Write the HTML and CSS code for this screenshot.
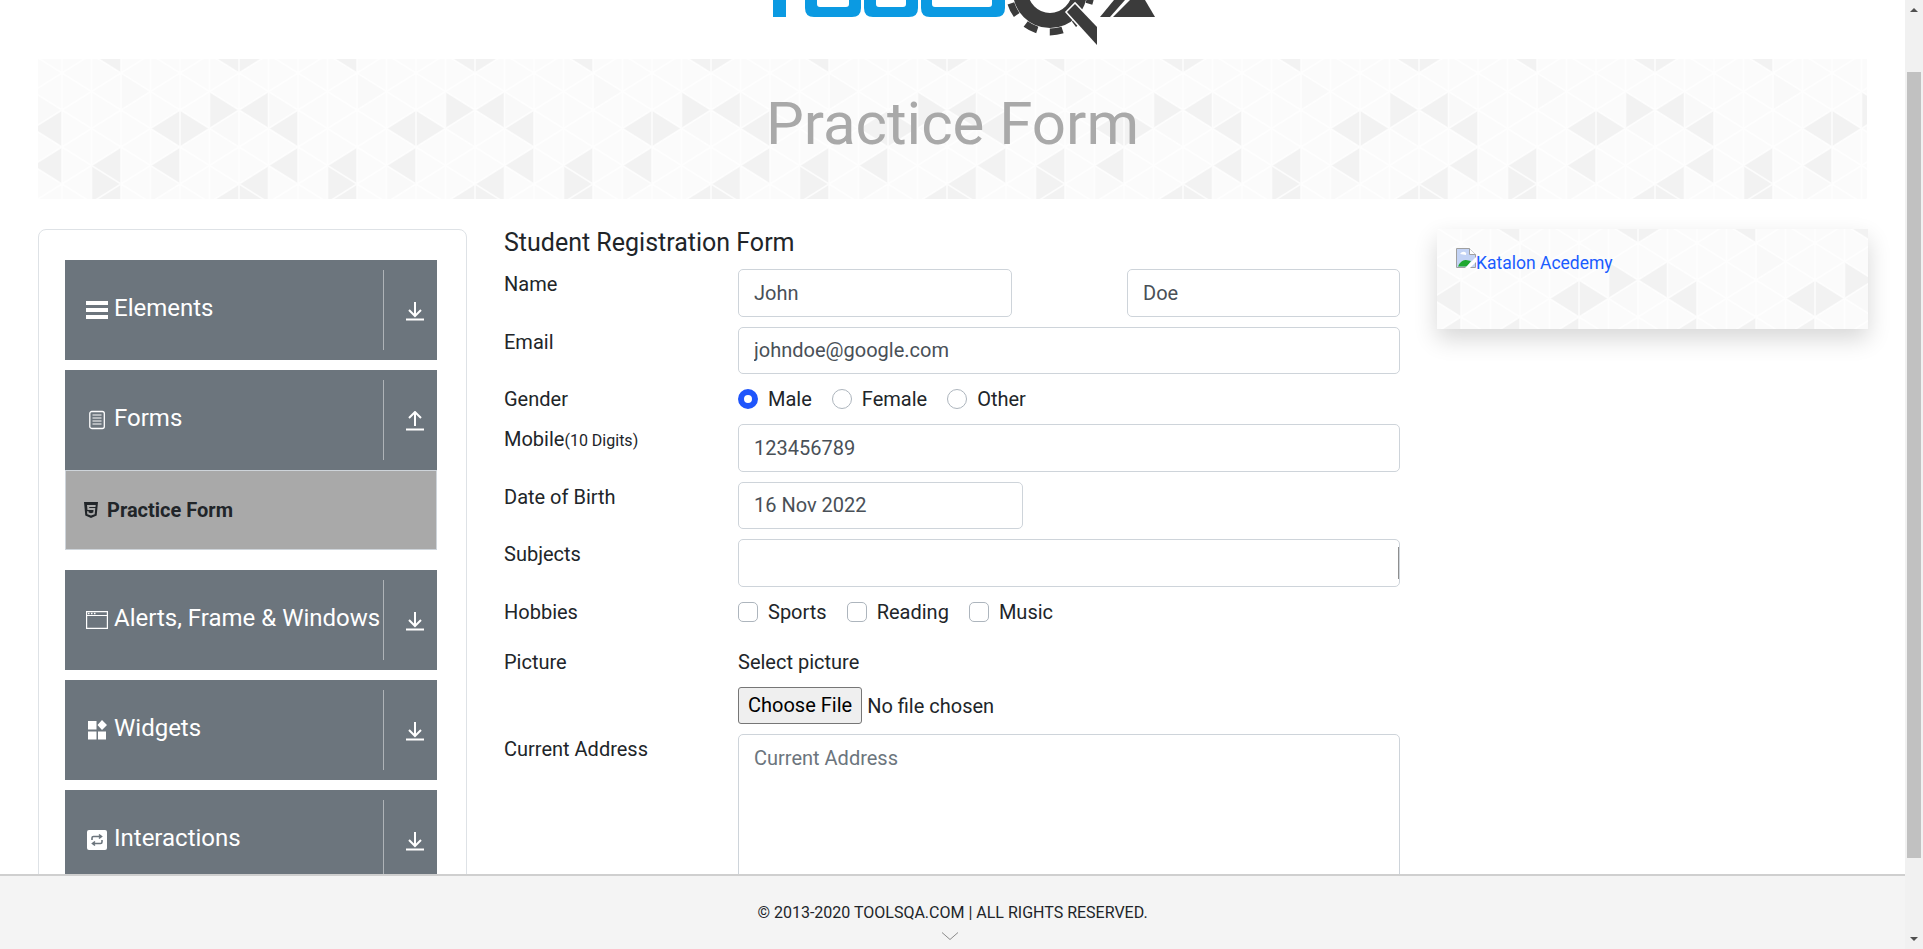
FILE: index.html
```html
<!DOCTYPE html>
<html lang="en">

<head>
    <meta charset="UTF-8">
    <meta name="viewport" content="width=device-width, initial-scale=1.0">
    <title>Practice Form</title>
    <link rel="stylesheet" href="styles.css">
</head>

<body>
    <div class="page">
        <div class="viewport">
            <header class="logo-bar">
                <svg class="logo" viewBox="750 0 405 59" width="405" height="59">
                    <g fill="#0b9ae2">
                        <rect x="773" y="-10" width="13" height="27"/>
                        <path d="M805-10h12v14q0 3 3 3h26q3 0 3-3v-14h12v18q0 9-9 9h-38q-9 0-9-9z"/>
                        <path d="M864-10h12v14q0 3 3 3h24q3 0 3-3v-14h12v18q0 9-9 9h-36q-9 0-9-9z"/>
                        <path d="M921-10h11v14q0 3 3 3h54q3 0 3-3v-14h13v18q0 9-9 9h-66q-9 0-9-9z"/>
                    </g>
                    <circle cx="1050" cy="-9" r="29.500" fill="none" stroke="#3b3b3b" stroke-width="15"/>
                    <circle cx="1050" cy="-9" r="41" fill="none" stroke="#3b3b3b" stroke-width="7" stroke-dasharray="13 12.760"/>
                    <path d="M1067 12l8-8 22 23v18z" fill="#3b3b3b" stroke="#fff" stroke-width="3" paint-order="stroke"/>
                    <g fill="#3b3b3b">
                        <path d="M1100 17h10l15-17h-11z"/>
                        <path d="M1113 17l17-17h15l10 17z"/>
                    </g>
                </svg>
            </header>

            <div class="main-header">
                <h1>Practice Form</h1>
            </div>

            <div class="content">
                <aside class="side-card">
                    <div class="group">
                        <div class="group-header">
                            <div class="group-title">
                                <svg class="group-icon" viewBox="0 0 22 20"><path fill="#fff" d="M0 1h22v4H0zM0 8h22v4H0zM0 15h22v4H0z"/></svg>
                                <span>Elements</span>
                            </div>
                            <div class="group-toggle">
                                <svg class="toggle-icon" viewBox="0 0 18 20"><path d="M0 18.500h18M9 1v14M3 9l6 6 6-6"/></svg>
                            </div>
                        </div>
                    </div>

                    <div class="group">
                        <div class="group-header">
                            <div class="group-title">
                                <svg class="group-icon" viewBox="0 0 22 20"><rect x="3.800" y="1.500" width="14.500" height="17" rx="2" fill="none" stroke="#fff" stroke-width="1.300"/><path d="M6.500 5h9M6.500 8h9M6.500 11h9M6.500 14h9" stroke="#fff"/></svg>
                                <span>Forms</span>
                            </div>
                            <div class="group-toggle">
                                <svg class="toggle-icon" viewBox="0 0 18 20"><path d="M0 18.500h18M9 15V1M3 7l6-6 6 6"/></svg>
                            </div>
                        </div>
                        <div class="menu-item">
                            <svg class="menu-icon" viewBox="0 0 14 16"><path fill="#212529" d="M0 0h14l-1.300 13.500L7 16l-5.700-2.500zM3 3l.5 5h6l-.2 2.500L7 11.300l-2.300-.8-.1-1.200H3l.3 3L7 13.500l3.700-1.200.6-6.300H5.300l-.1-1H11.500l.2-2z"/></svg>
                            <span>Practice Form</span>
                        </div>
                    </div>

                    <div class="group">
                        <div class="group-header">
                            <div class="group-title">
                                <svg class="group-icon" viewBox="0 0 22 20"><path fill="none" stroke="#fff" stroke-width="1.200" d="M.600 1.600h20.800v16.800H.600zM.600 5.500h20.800"/><path stroke="#fff" stroke-width="1.400" stroke-dasharray="1.500 1.500" d="M2 3.500h8"/></svg>
                                <span>Alerts, Frame &amp; Windows</span>
                            </div>
                            <div class="group-toggle">
                                <svg class="toggle-icon" viewBox="0 0 18 20"><path d="M0 18.500h18M9 1v14M3 9l6 6 6-6"/></svg>
                            </div>
                        </div>
                    </div>

                    <div class="group">
                        <div class="group-header">
                            <div class="group-title">
                                <svg class="group-icon" viewBox="0 0 22 20"><path fill="#fff" d="M2 1h8.500v8.500H2zM2 11.500h8.500V19.500H2zM12 11.500h8V19.500h-8zM16 0l5 5-5 5-4.500-5z"/></svg>
                                <span>Widgets</span>
                            </div>
                            <div class="group-toggle">
                                <svg class="toggle-icon" viewBox="0 0 18 20"><path d="M0 18.500h18M9 1v14M3 9l6 6 6-6"/></svg>
                            </div>
                        </div>
                    </div>

                    <div class="group">
                        <div class="group-header">
                            <div class="group-title">
                                <svg class="group-icon" viewBox="0 0 22 20"><rect x="1" y="0" width="20" height="20" rx="2" fill="#fff"/><path fill="none" stroke="#6c757d" stroke-width="1.600" d="M6 10V8q0-1.500 1.500-1.500H15M13 4.500l2.500 2-2.500 2M16 10v2q0 1.500-1.500 1.500H7M9 11.500l-2.500 2 2.500 2"/></svg>
                                <span>Interactions</span>
                            </div>
                            <div class="group-toggle">
                                <svg class="toggle-icon" viewBox="0 0 18 20"><path d="M0 18.500h18M9 1v14M3 9l6 6 6-6"/></svg>
                            </div>
                        </div>
                    </div>
                </aside>

                <form class="student-form">
                    <h5>Student Registration Form</h5>

                    <div class="form-row row-field">
                        <label>Name</label>
                        <div class="name-fields">
                            <input class="form-control first-name" type="text" value="John">
                            <input class="form-control last-name" type="text" value="Doe">
                        </div>
                    </div>

                    <div class="form-row row-field">
                        <label>Email</label>
                        <input class="form-control" type="text" value="johndoe@google.com">
                    </div>

                    <div class="form-row row-choice">
                        <label>Gender</label>
                        <div class="choices">
                            <label class="choice"><input type="radio" name="gender" checked>Male</label>
                            <label class="choice"><input type="radio" name="gender">Female</label>
                            <label class="choice"><input type="radio" name="gender">Other</label>
                        </div>
                    </div>

                    <div class="form-row row-field">
                        <label>Mobile<small>(10 Digits)</small></label>
                        <input class="form-control" type="text" value="123456789">
                    </div>

                    <div class="form-row row-field">
                        <label>Date of Birth</label>
                        <input class="form-control date-input" type="text" value="16 Nov 2022">
                    </div>

                    <div class="form-row row-field">
                        <label>Subjects</label>
                        <div class="form-control subjects"><span class="subjects-edge"></span></div>
                    </div>

                    <div class="form-row row-choice row-hobbies">
                        <label>Hobbies</label>
                        <div class="choices hobbies">
                            <label class="choice"><input type="checkbox">Sports</label>
                            <label class="choice"><input type="checkbox">Reading</label>
                            <label class="choice"><input type="checkbox">Music</label>
                        </div>
                    </div>

                    <div class="form-row row-picture">
                        <label>Picture</label>
                        <div class="picture-field">
                            <label>Select picture</label>
                            <input class="file-input" type="file">
                        </div>
                    </div>

                    <div class="form-row row-address">
                        <label>Current Address</label>
                        <textarea class="form-control address" placeholder="Current Address"></textarea>
                    </div>
                </form>

                <div class="ad-card">
                    <a href="#" class="ad-link">
                        <svg class="broken-img" viewBox="0 0 20 20" width="20" height="20">
                            <path d="M.5.5h13l6 6v13H.5z" fill="#c3d3f5" stroke="#a0a0a0"/>
                            <path d="M13.500.5v6h6" fill="#fff" stroke="#a0a0a0"/>
                            <path d="M2 18.500q3-7 8-6.500l5 1-4 5.500z" fill="#1fa830"/>
                            <path d="M4 6q2-3 5-2 2 1 1 3z" fill="#fff"/>
                            <path d="M9 20l11-11v5l-6 6z" fill="#fff"/>
                        </svg><span>Katalon Acedemy</span>
                    </a>
                </div>
            </div>

            <footer class="site-footer">
                <span>© 2013-2020 TOOLSQA.COM | ALL RIGHTS RESERVED.</span>
                <svg class="footer-chevron" viewBox="0 0 16 8" width="16" height="8"><path d="M0 .5l8 7 8-7" fill="none" stroke="#8a8a8a"/></svg>
            </footer>
        </div>

        <!-- classic scrollbar, headless chrome does not paint one -->
        <div class="scrollbar">
            <svg class="scroll-arrow" viewBox="0 0 8 4" width="8" height="4"><path d="M4 0l4 4H0z"/></svg>
            <div class="scroll-thumb"></div>
            <svg class="scroll-arrow" viewBox="0 0 8 4" width="8" height="4"><path d="M0 0h8L4 4z"/></svg>
        </div>
    </div>
</body>

</html>
```

FILE: styles.css
```css
* {
    box-sizing: border-box;
}

html,
body {
    margin: 0;
    padding: 0;
    height: 100%;
    overflow: hidden;
}

body {
    font-family: Roboto, "Liberation Sans", sans-serif;
    font-size: 20px;
    color: #212529;
    background: #fff;
}

.page {
    display: flex;
    height: 100vh;
}

.viewport {
    position: relative;
    flex: 1;
    min-width: 0;
    overflow: hidden;
}

/* logo is scrolled off the top, only its lower edge shows */
.logo-bar {
    display: flex;
    justify-content: center;
    height: 59px;
}

.main-header,
.ad-card {
    background-color: #fbfbfb;
    background-image: url("data:image/svg+xml,%3Csvg xmlns='http://www.w3.org/2000/svg' width='236' height='148'%3E%3Cg fill='%23f9f9f9'%3E%3Cpath d='M59 0v37l29.500-18.500zM177 37v37l-29.500-18.500zM88.500 92.500v37l29.500-18.500zM206.500 18.500v37l29.500-18.500z'/%3E%3C/g%3E%3Cg fill='%23f2f2f2'%3E%3Cpath d='M236 37v37l-29.500-18.500zM118 37v37l-29.500-18.500zM118 37v37l29.500-18.500zM147.500 18.500v37l29.500-18.500zM206.500 18.500v37l-29.500-18.500zM236 74v37l-29.500-18.500zM59 74v37l-29.500-18.500zM29.500 92.500v37l29.500-18.500zM118 74v37l-29.500-18.500zM206.500 92.500v37l-29.500-18.500zM59 111v37l-29.500-18.500zM177 111v37l-29.500-18.500zM177 111v37l29.500-18.500z'/%3E%3C/g%3E%3Cpath fill='none' stroke='%23fff' stroke-width='1.600' stroke-opacity='.75' d='M0-148L236 0M0-111L236 37M0-74L236 74M0-37L236 111M0 0L236 148M0 37L236 185M0 74L236 222M0 111L236 259M0 37L236-111M0 74L236-74M0 111L236-37M0 148L236 0M0 185L236 37M0 222L236 74M0 259L236 111M0 296L236 148M0 0V148M29.500 0V148M59 0V148M88.500 0V148M118 0V148M147.500 0V148M177 0V148M206.500 0V148M236 0V148'/%3E%3C/svg%3E");
    background-position: 23.700px 14.300px;
}

.main-header {
    display: flex;
    align-items: center;
    justify-content: center;
    height: 140px;
    margin: 0 38px;
}

.main-header h1 {
    margin: 0 0 10px;
    font-size: 60px;
    font-weight: 400;
    line-height: 1.2;
    color: #a9a9a9;
}

.content {
    display: flex;
    align-items: flex-start;
    margin: 30px 36px 0 38px;
}

.side-card {
    flex: 0 0 429px;
    height: 800px;
    padding: 30px 29px 0 26px;
    border: 1px solid #dee2e6;
    border-radius: 8px;
}

.group {
    margin-bottom: 10px;
}

.group-header {
    display: flex;
    align-items: center;
    height: 100px;
    background: #6c757d;
    color: #fff;
}

.group-title {
    display: flex;
    flex: 0 0 318px;
    align-items: center;
    padding-left: 21px;
    font-size: 24px;
    white-space: nowrap;
}

.group-title span {
    margin-bottom: 4px;
}

.group-icon {
    flex: none;
    width: 22px;
    height: 20px;
    margin-right: 6px;
}

.group-toggle {
    display: flex;
    flex: 1;
    align-items: center;
    height: 80px;
    padding: 2px 0 0 22px;
    border-left: 1px solid rgba(255, 255, 255, .45);
}

.toggle-icon {
    width: 18px;
    height: 20px;
    fill: none;
    stroke: #fff;
    stroke-width: 2;
}

.menu-item {
    display: flex;
    align-items: center;
    height: 80px;
    margin-bottom: 20px;
    padding-left: 18px;
    border: 1px solid #ced4da;
    background: #a9a9a9;
    font-size: 20px;
    font-weight: 700;
}

.menu-icon {
    width: 14px;
    height: 16px;
    margin-right: 9px;
}

.student-form {
    flex: 0 0 896px;
    margin-left: 37px;
}

.student-form h5 {
    margin: 0 0 12px;
    height: 28px;
    font-size: 25px;
    font-weight: 400;
    line-height: 28px;
}

.form-row {
    display: grid;
    grid-template-columns: 234px 662px;
    margin-bottom: 10px;
    line-height: 30px;
}

.form-row small {
    font-size: 16px;
}

.form-control {
    display: block;
    width: 100%;
    height: 47.500px;
    padding: 0 15px;
    border: 1px solid #ced4da;
    border-radius: 5px;
    background: #fff;
    font-family: inherit;
    font-size: 20px;
    color: #495057;
}

.name-fields {
    display: flex;
    justify-content: space-between;
}

.first-name {
    width: 274px;
}

.last-name {
    width: 273px;
}

.date-input {
    width: 285px;
}

.subjects {
    display: flex;
    align-items: center;
    justify-content: flex-end;
    padding: 0;
}

.subjects-edge {
    width: 1px;
    height: 32px;
    background: #8f8f8f;
}

.choices {
    display: flex;
    gap: 20px;
}

.choice {
    display: flex;
    align-items: center;
    gap: 10px;
    height: 30px;
}

.choice input {
    width: 20px;
    height: 20px;
    margin: 0;
    border: 1px solid #adb5bd;
    background: #fff;
    appearance: none;
}

.choice input[type="radio"] {
    border-radius: 50%;
}

.choice input[type="checkbox"] {
    border-radius: 5px;
}

.choice input:checked {
    border: 6px solid #1f55fb;
}

.row-hobbies {
    margin-bottom: 20px;
}

.picture-field {
    display: flex;
    flex-direction: column;
    align-items: flex-start;
    gap: 10px;
}

.file-input {
    height: 37px;
    font-family: inherit;
    font-size: 20px;
}

.file-input::file-selector-button {
    height: 37px;
    margin-right: 5px;
    padding: 0 9px;
    border: 1px solid #767676;
    border-radius: 3px;
    background: #efefef;
    font-family: inherit;
    font-size: 20px;
}

.address {
    height: 300px;
    padding-top: 8px;
    line-height: 30px;
    resize: none;
}

.address::placeholder {
    color: #6c757d;
}

.ad-card {
    flex: 0 0 431px;
    height: 100px;
    margin-left: 37px;
    padding: 19px;
    box-shadow: 0 10px 22px rgba(0, 0, 0, .16);
}

.ad-link {
    display: flex;
    align-items: flex-start;
    color: #1a5cff;
    font-size: 17.500px;
    line-height: 30px;
    text-decoration: none;
}

.broken-img {
    flex: none;
}

.site-footer {
    position: absolute;
    left: 0;
    right: 0;
    bottom: 0;
    display: flex;
    flex-direction: column;
    align-items: center;
    height: 75px;
    padding-top: 27px;
    border-top: 2px solid #cfcfcf;
    background: #f4f4f4;
    font-size: 16px;
    line-height: 20px;
}

.footer-chevron {
    margin: 9px 5px 0 0;
}

.scrollbar {
    display: flex;
    flex: 0 0 18px;
    flex-direction: column;
    align-items: center;
    padding-top: 8px;
    background: #f1f1f1;
}

.scroll-arrow {
    fill: #505050;
}

.scroll-thumb {
    width: 14px;
    height: 786px;
    margin: 60px 0 79px;
    background: #c1c1c1;
}
```
